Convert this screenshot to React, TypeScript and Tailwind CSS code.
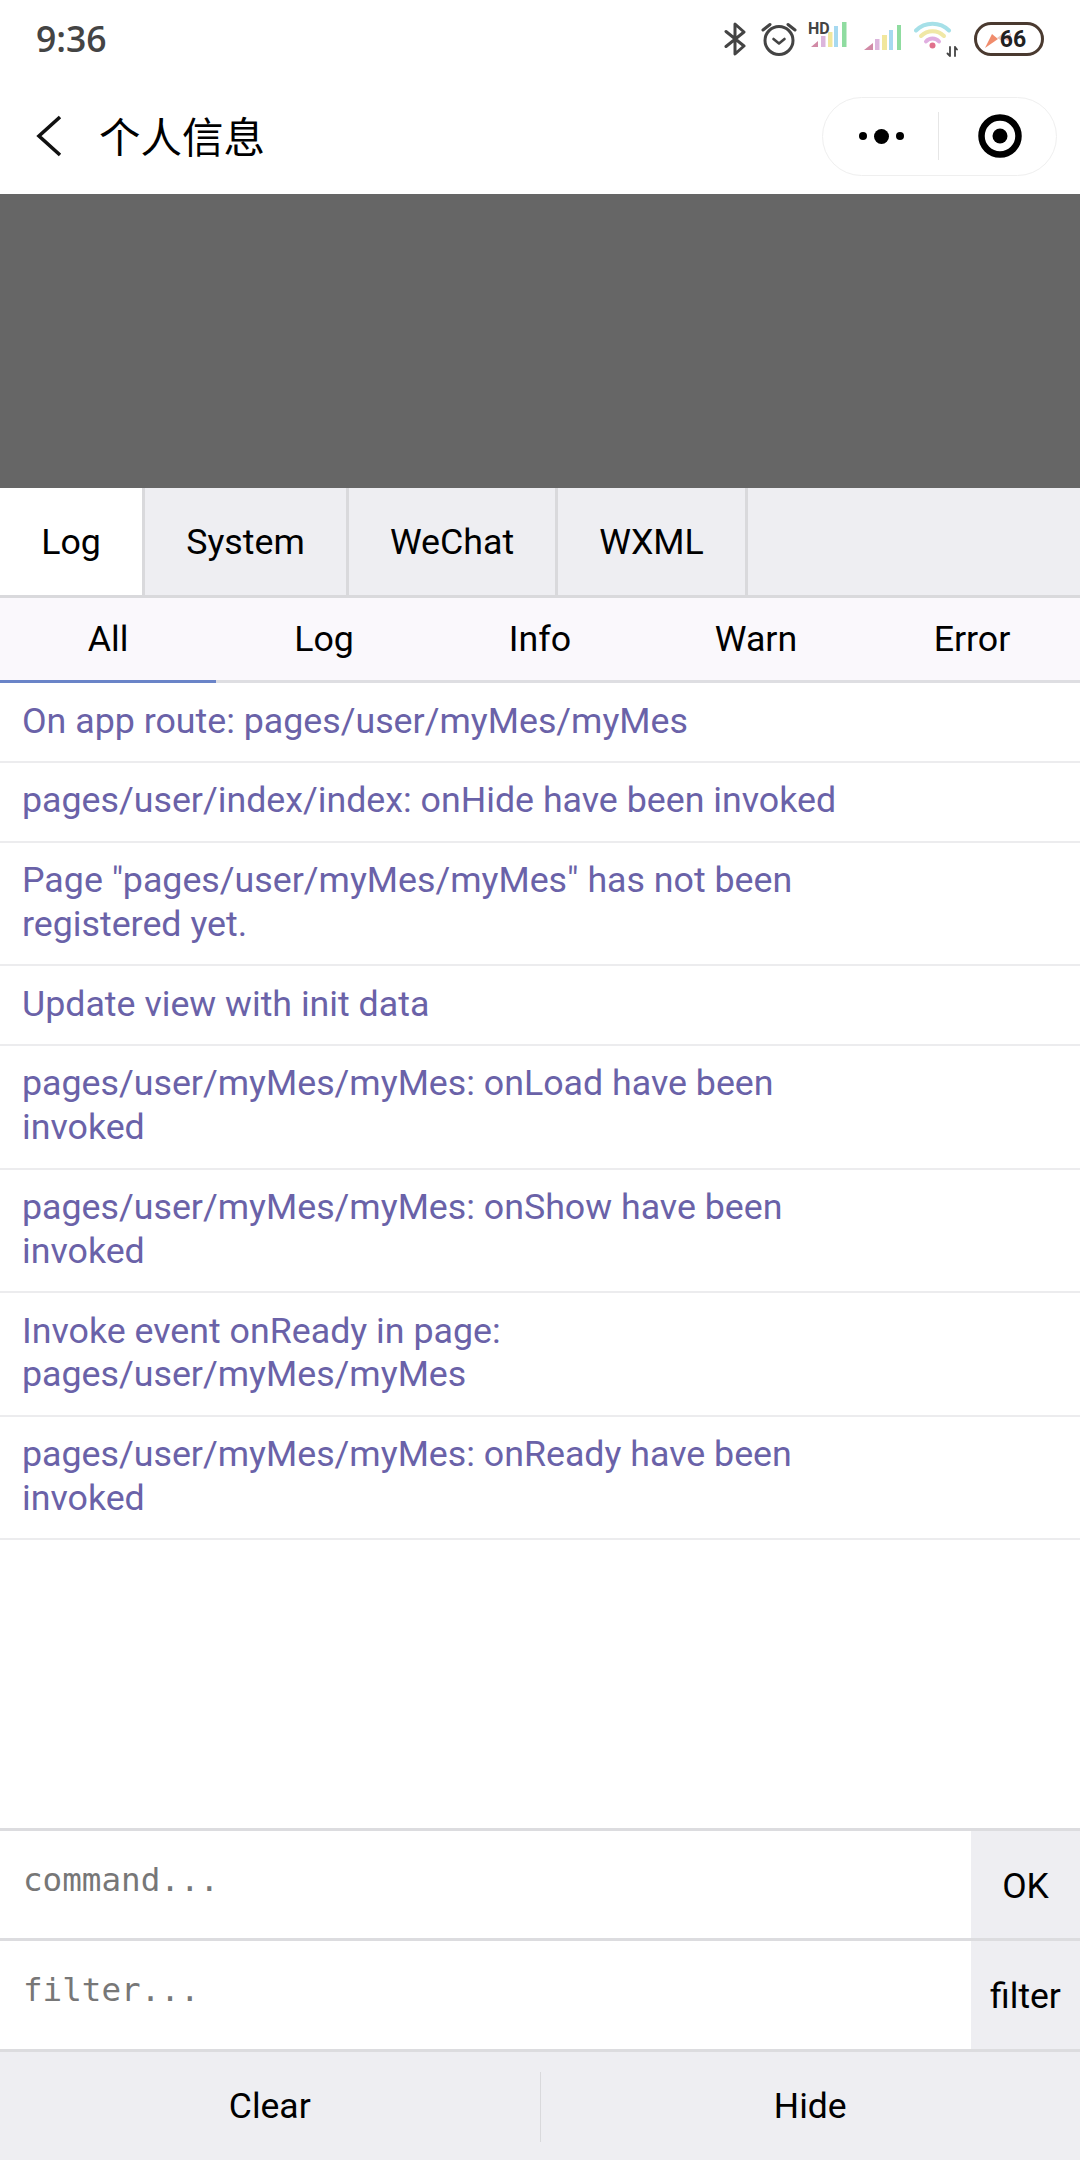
import React from "react";

const TOP_TABS = [
  { label: "Log", width: "w-[145px]", active: true },
  { label: "System", width: "w-[204px]", active: false },
  { label: "WeChat", width: "w-[209px]", active: false },
  { label: "WXML", width: "w-[190px]", active: false },
];

const SUB_TABS = ["All", "Log", "Info", "Warn", "Error"];

const LOGS = [
  "On app route: pages/user/myMes/myMes",
  "pages/user/index/index: onHide have been invoked",
  'Page "pages/user/myMes/myMes" has not been registered yet.',
  "Update view with init data",
  "pages/user/myMes/myMes: onLoad have been invoked",
  "pages/user/myMes/myMes: onShow have been invoked",
  "Invoke event onReady in page: pages/user/myMes/myMes",
  "pages/user/myMes/myMes: onReady have been invoked",
];

function Bluetooth() {
  return (
    <svg width="22" height="34" viewBox="0 0 22 34" fill="none" stroke="#444" strokeWidth="3" strokeLinejoin="round" strokeLinecap="round">
      <path d="M2 9.5 20 24 11 32V2l9 8L2 24.5" />
    </svg>
  );
}

function Alarm() {
  return (
    <svg width="36" height="34" viewBox="0 0 36 34" fill="none" stroke="#444" strokeLinecap="round" strokeLinejoin="round">
      <circle cx="18" cy="18.5" r="14" strokeWidth="3" />
      <path d="M12.5 17 18 21.5 23.5 17" strokeWidth="2.6" />
      <path d="M2 8 9 2.5M34 8 27 2.5" strokeWidth="3" />
    </svg>
  );
}

function SignalHd() {
  return (
    <svg width="40" height="44" viewBox="0 -5 40 44" fill="none">
      <text x="0" y="11.5" fontSize="16" fontWeight="700" fontFamily="Roboto, sans-serif" fill="#444">
        HD
      </text>
      <path d="M3 25 10 19V25Z" fill="#d18aa6" />
      <rect x="13" y="14" width="4.5" height="11" fill="#dcb5dc" />
      <rect x="20" y="10" width="4.5" height="15" fill="#f1e79d" />
      <rect x="26" y="4" width="4" height="21" fill="#a6d9f0" />
      <rect x="34" y="0" width="4.5" height="25" fill="#8fdca0" />
    </svg>
  );
}

function Signal() {
  return (
    <svg width="40" height="34" viewBox="0 0 40 34" fill="none">
      <path d="M0 28 9 21V28Z" fill="#d18aa6" />
      <rect x="11" y="17" width="4.5" height="11" fill="#dcb5dc" />
      <rect x="18" y="13" width="5" height="15" fill="#f1e79d" />
      <rect x="25" y="8" width="4" height="20" fill="#a6d9f0" />
      <rect x="33" y="3" width="4" height="25" fill="#8fdca0" />
    </svg>
  );
}

function Wifi() {
  return (
    <svg width="44" height="36" viewBox="0 0 44 36" fill="none" strokeLinecap="round">
      <path d="M2 9.5C11 .5 26 .5 35 9.5" stroke="#a6e0e8" strokeWidth="4" />
      <path d="M7 15C13.5 8.5 23.5 8.5 30 15" stroke="#f0e8a6" strokeWidth="4" />
      <path d="M12 20.5C15.5 16.5 21.5 16.5 25 20.5" stroke="#e0aee0" strokeWidth="4" />
      <circle cx="18.5" cy="24.5" r="3" fill="#e0708c" />
      <path d="M36 26v9M33.5 32.5 36 35M41 26v9M41 26l2 2.5" stroke="#444" strokeWidth="1.8" />
    </svg>
  );
}

function Battery() {
  return (
    <div className="relative flex h-[34px] w-[70px] items-center justify-center rounded-full border-[3px] border-[#4a3a30] bg-white">
      <svg className="absolute left-[6px] top-[5px]" width="30" height="20" viewBox="0 0 30 20">
        <path d="M2 18 9 4l6 5Z" fill="#f08c6c" />
        <path d="M14 8l8-6-1 10Z" fill="#e8c8c0" />
        <path d="M21 9l7-6-1 9Z" fill="#eeb0a8" />
      </svg>
      <span className="relative pl-[8px] font-['Roboto',sans-serif] text-[23px] font-bold leading-none text-[#222]">66</span>
    </div>
  );
}

function Capsule() {
  return (
    <div className="flex h-[79px] w-[235px] items-center rounded-full border border-[#efefef] bg-white">
      <div className="flex w-[115px] items-center justify-center gap-[7px] pl-[1px]">
        <span className="h-[8px] w-[8px] rounded-full bg-black" />
        <span className="h-[15px] w-[15px] rounded-full bg-black" />
        <span className="h-[8px] w-[8px] rounded-full bg-black" />
      </div>
      <div className="h-[48px] w-px bg-[#e6e6e6]" />
      <div className="flex flex-1 items-center justify-center pl-[4px]">
        <svg width="44" height="44" viewBox="0 0 44 44">
          <circle cx="22" cy="22" r="18.5" fill="none" stroke="#000" strokeWidth="6.5" />
          <circle cx="22" cy="22" r="7.5" fill="#000" />
        </svg>
      </div>
    </div>
  );
}

export default function App() {
  return (
    <div className="flex h-[2160px] w-[1080px] flex-col overflow-hidden bg-white font-['Roboto',sans-serif] text-black">
      {/* Status bar */}
      <div className="flex h-[78px] shrink-0 items-center justify-between pl-[36px] pr-[36px]">
        <span className="font-['Open_Sans',sans-serif] text-[35.5px] font-semibold leading-none text-[#444]">9:36</span>
        <div className="flex items-center">
          <Bluetooth />
          <div className="ml-[15px]"><Alarm /></div>
          <div className="ml-[11px]"><SignalHd /></div>
          <div className="ml-[16px]"><Signal /></div>
          <div className="ml-[10px]"><Wifi /></div>
          <div className="ml-[16px]"><Battery /></div>
        </div>
      </div>

      {/* Nav bar */}
      <div className="flex h-[116px] shrink-0 items-center justify-between pl-[36px] pr-[23px]">
        <div className="flex items-center">
          <svg width="26" height="42" viewBox="0 0 26 42" fill="none" stroke="#111" strokeWidth="3.6">
            <path d="M24 2 3 21l21 19" />
          </svg>
          <span className="ml-[37px] font-['Noto_Sans_CJK_SC',sans-serif] text-[41.5px] leading-none">个人信息</span>
        </div>
        <Capsule />
      </div>

      <div className="h-[294px] shrink-0 bg-[#666666]" />

      {/* Top tabs */}
      <div className="flex h-[110px] shrink-0 border-b-[3px] border-[#d9d9dc] bg-[#eeeef2]">
        {TOP_TABS.map((tab) => (
          <div
            key={tab.label}
            className={`flex items-center justify-center border-r-[3px] border-[#d9d9dc] pt-[3px] text-[35.75px] ${tab.width} ${tab.active ? "bg-white" : ""}`}
          >
            {tab.label}
          </div>
        ))}
      </div>

      {/* Sub tabs */}
      <div className="flex h-[85px] shrink-0 bg-[#faf8fc]">
        {SUB_TABS.map((tab, i) => (
          <div
            key={tab}
            className={`flex flex-1 items-center justify-center border-b-[3px] pt-[1px] text-[35.75px] ${i === 0 ? "border-[#6a84c8]" : "border-[#dedee2]"}`}
          >
            {tab}
          </div>
        ))}
      </div>

      {/* Log list */}
      <div className="min-h-0 flex-1">
        {LOGS.map((log) => (
          <div key={log} className="border-b-2 border-[#ececee] pb-[17.5px] pl-[22px] pr-[215px] pt-[16.5px] text-[35.75px] leading-[43.8px] text-[#6a62a8]">
            {log}
          </div>
        ))}
      </div>

      {/* Command + filter */}
      <div className="flex h-[110px] shrink-0 border-t-[3px] border-[#dcdcdf]">
        <div className="flex-1 pl-[23px] pt-[27px] font-['DejaVu_Sans_Mono',monospace] text-[32.6px] leading-[44px] text-[#777]">command...</div>
        <div className="flex w-[109px] items-center justify-center bg-[#eeeef2] pt-[4px] text-[35.5px]">OK</div>
      </div>
      <div className="flex h-[114px] shrink-0 border-y-[3px] border-[#dcdcdf]">
        <div className="flex-1 pl-[23px] pt-[27px] font-['DejaVu_Sans_Mono',monospace] text-[32.6px] leading-[44px] text-[#777]">filter...</div>
        <div className="flex w-[109px] items-center justify-center bg-[#eeeef2] pt-[4px] text-[35.5px]">filter</div>
      </div>

      {/* Bottom buttons */}
      <div className="flex h-[108px] shrink-0 items-center bg-[#eeeef2] pt-[2px] text-[35.5px]">
        <div className="flex flex-1 items-center justify-center">Clear</div>
        <div className="h-[70px] w-px bg-[#d9d9dc]" />
        <div className="flex flex-1 items-center justify-center">Hide</div>
      </div>
    </div>
  );
}
